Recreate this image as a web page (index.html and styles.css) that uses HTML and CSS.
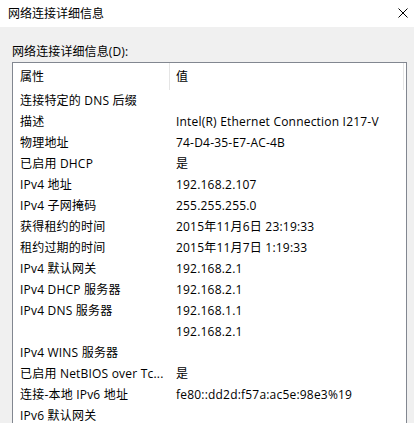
FILE: index.html
```html
<!DOCTYPE html>
<html lang="zh-CN">
<head>
    <meta charset="UTF-8">
    <title>网络连接详细信息</title>
    <link rel="stylesheet" href="styles.css">
</head>
<body>
    <div class="titlebar">
        <span class="title">网络连接详细信息</span>
        <svg class="close" width="10" height="10" viewBox="0 0 10 10">
            <path d="M0.5 0.5 L9.5 9.5 M9.5 0.5 L0.5 9.5" stroke="#000" stroke-width="1" fill="none"/>
        </svg>
    </div>
    <div class="content">
        <div class="label">网络连接详细信息(D):</div>
        <div class="listbox">
            <div class="header">
                <div class="col-prop">属性</div>
                <div class="col-val">值</div>
                <div class="col-end"></div>
            </div>
            <div class="rows">
                <div class="row"><div class="prop">连接特定的 DNS 后缀</div><div class="val"></div></div>
                <div class="row"><div class="prop">描述</div><div class="val">Intel(R) Ethernet Connection I217-V</div></div>
                <div class="row"><div class="prop">物理地址</div><div class="val">74-D4-35-E7-AC-4B</div></div>
                <div class="row"><div class="prop">已启用 DHCP</div><div class="val">是</div></div>
                <div class="row"><div class="prop">IPv4 地址</div><div class="val">192.168.2.107</div></div>
                <div class="row"><div class="prop">IPv4 子网掩码</div><div class="val">255.255.255.0</div></div>
                <div class="row"><div class="prop">获得租约的时间</div><div class="val">2015年11月6日 23:19:33</div></div>
                <div class="row"><div class="prop">租约过期的时间</div><div class="val">2015年11月7日 1:19:33</div></div>
                <div class="row"><div class="prop">IPv4 默认网关</div><div class="val">192.168.2.1</div></div>
                <div class="row"><div class="prop">IPv4 DHCP 服务器</div><div class="val">192.168.2.1</div></div>
                <div class="row"><div class="prop">IPv4 DNS 服务器</div><div class="val">192.168.1.1</div></div>
                <div class="row"><div class="prop"></div><div class="val">192.168.2.1</div></div>
                <div class="row"><div class="prop">IPv4 WINS 服务器</div><div class="val"></div></div>
                <div class="row"><div class="prop">已启用 NetBIOS over Tc...</div><div class="val">是</div></div>
                <div class="row"><div class="prop">连接-本地 IPv6 地址</div><div class="val">fe80::dd2d:f57a:ac5e:98e3%19</div></div>
                <div class="row"><div class="prop">IPv6 默认网关</div><div class="val"></div></div>
            </div>
        </div>
    </div>
</body>
</html>
```
FILE: styles.css
```css
* {
    box-sizing: border-box;
}
body {
    margin: 0;
    padding: 0;
    width: 414px;
    height: 423px;
    overflow: hidden;
    font-family: "Open Sans", "Noto Sans CJK SC", sans-serif;
    font-size: 12px;
    color: #000;
    background-color: #f0f0f0;
}
.titlebar {
    height: 27px;
    background: #fff;
    display: flex;
    align-items: center;
    justify-content: space-between;
    padding: 0 6px 3px 8px;
}
.title {
    font-family: "Noto Sans CJK SC", sans-serif;
    font-size: 12px;
}
.close {
    margin-top: 2px;
}
.content {
    padding: 15px 7px 0 12px;
}
.label {
    height: 20px;
    line-height: 20px;
    letter-spacing: 0.1px;
}
.listbox {
    border: 1px solid #828790;
    border-bottom: none;
    background: #fff;
    height: 361px;
    overflow: hidden;
}
.header {
    display: flex;
    height: 27px;
    line-height: 27px;
}
.col-prop {
    width: 157px;
    padding-left: 7px;
    border-right: 1px solid #e5e5e5;
}
.col-val {
    flex: 1;
    padding-left: 6px;
}
.col-end {
    width: 3px;
    border-left: 1px solid #e5e5e5;
}
.row {
    display: flex;
    height: 21px;
    line-height: 21px;
    white-space: nowrap;
    letter-spacing: 0.2px;
}
.prop {
    width: 157px;
    padding-left: 7px;
    overflow: hidden;
}
.val {
    flex: 1;
    padding-left: 6px;
}
```
